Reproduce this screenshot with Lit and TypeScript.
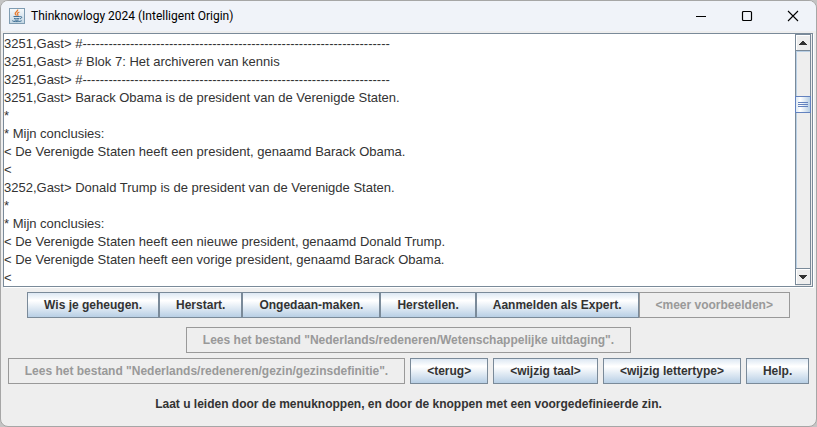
import { LitElement, html, css, svg } from "lit";
import { customElement, property } from "lit/decorators.js";

const RULE = "#" + "-".repeat(71);

const CONSOLE_TEXT = [
  "3251,Gast> " + RULE,
  "3251,Gast> # Blok 7: Het archiveren van kennis",
  "3251,Gast> " + RULE,
  "3251,Gast> Barack Obama is de president van de Verenigde Staten.",
  "*",
  "* Mijn conclusies:",
  "< De Verenigde Staten heeft een president, genaamd Barack Obama.",
  "<",
  "3252,Gast> Donald Trump is de president van de Verenigde Staten.",
  "*",
  "* Mijn conclusies:",
  "< De Verenigde Staten heeft een nieuwe president, genaamd Donald Trump.",
  "< De Verenigde Staten heeft een vorige president, genaamd Barack Obama.",
  "<",
].join("\n");

interface Action {
  label: string;
  disabled?: boolean;
}

const MENU: Action[] = [
  { label: "Wis je geheugen." },
  { label: "Herstart." },
  { label: "Ongedaan-maken." },
  { label: "Herstellen." },
  { label: "Aanmelden als Expert." },
  { label: "<meer voorbeelden>", disabled: true },
];

const CHALLENGE: Action[] = [
  { label: 'Lees het bestand "Nederlands/redeneren/Wetenschappelijke uitdaging".', disabled: true },
];

const NAVIGATION: Action[] = [
  { label: 'Lees het bestand "Nederlands/redeneren/gezin/gezinsdefinitie".', disabled: true },
  { label: "<terug>" },
  { label: "<wijzig taal>" },
  { label: "<wijzig lettertype>" },
  { label: "Help." },
];

@customElement("title-bar")
export class TitleBar extends LitElement {
  @property() heading = "";

  static styles = css`
    :host {
      display: flex;
      align-items: center;
      height: 30px;
      padding-left: 8px;
      background: #f0f3f9;
      color: #000;
      font: 12px/16px Roboto, "Open Sans", sans-serif;
    }
    .logo {
      width: 16px;
      height: 16px;
      margin-right: 6px;
    }
    .heading {
      flex: 1;
      margin: 0;
      font: inherit;
      white-space: nowrap;
    }
    .control {
      display: grid;
      place-items: center;
      width: 46px;
      height: 30px;
      padding: 0;
      border: 0;
      background: none;
      color: inherit;
    }
    .control:hover {
      background: #dfe3ea;
    }
  `;

  private control(label: string, glyph: unknown) {
    return html`<button class="control" aria-label=${label}>
      <svg width="12" height="12" viewBox="0 0 12 12" fill="none" stroke="currentColor">${glyph}</svg>
    </button>`;
  }

  render() {
    return html`
      <svg class="logo" viewBox="0 0 16 16" aria-hidden="true">
        <defs>
          <linearGradient id="tile" x1="0" y1="0" x2="0" y2="1">
            <stop offset="0" stop-color="#f7fafc" />
            <stop offset="1" stop-color="#c3d6e4" />
          </linearGradient>
        </defs>
        <rect x="0.5" y="0.5" width="15" height="15" fill="url(#tile)" stroke="#7f9cb2" />
        <path d="M8.6 1.5c.9 1.7-3 2.7-2.4 4.3.2.6 1 1.2 1.2 1.8M10.4 4c-1.6.7-2.6 1.3-1.7 2.3.4.5.3 1-.2 1.4" fill="none" stroke="#e8792b" stroke-width="1.3" />
        <path d="M4.500 8.500h6.300M5 10.300c1.400.5 4 .5 5.400 0M5.600 12c1.200.4 3 .4 4.200 0M11.200 8.600c2-.5 2.200 1.500-.2 2.200M3.500 12.500c-1.200 1.200 7.500 1.600 9.200.2" fill="none" stroke="#3f6f94" />
      </svg>
      <h1 class="heading">${this.heading}</h1>
      ${this.control("Minimaliseren", svg`<path d="M1 6.500h10" />`)}
      ${this.control("Maximaliseren", svg`<rect x="1.5" y="1.5" width="9" height="9" rx="1" stroke-width="1.2" />`)}
      ${this.control("Sluiten", svg`<path d="M1 1l10 10M11 1L1 11" stroke-width="1.1" />`)}
    `;
  }
}

@customElement("metal-scrollbar")
export class MetalScrollbar extends LitElement {
  static styles = css`
    :host {
      display: flex;
      flex-direction: column;
      box-sizing: border-box;
      width: 16px;
      border: 1px solid #7a8a99;
      background: #eee;
    }
    .arrow {
      display: grid;
      place-items: center;
      height: 15px;
      padding: 0;
      border: 0;
      background: #eee;
      box-shadow: inset 1px 1px #fff;
    }
    .track {
      flex: 1;
      display: grid;
      grid-template-rows: 46fr 17px 157fr;
      border: solid #7a8a99;
      border-width: 1px 0;
      box-shadow: inset 1px 1px #b8cfe5;
    }
    .thumb {
      grid-row: 2;
      display: grid;
      place-items: center;
      margin: 0 -1px;
      box-sizing: border-box;
      border: 1px solid #6382bf;
      background: linear-gradient(90deg, #dce8f3, #fff 30%, #b8cfe5);
    }
  `;

  render() {
    return html`
      <button class="arrow" aria-label="Omhoog">
        <svg width="8" height="4" viewBox="0 0 8 4" fill="#333"><path d="M3 0h2v1h1v1h1v1h1v1H0V3h1V2h1V1h1z" /></svg>
      </button>
      <div class="track">
        <div class="thumb">
          <svg width="10" height="6" viewBox="0 0 10 6" stroke="#6382bf"><path d="M0 .5h10M0 2.5h10M0 4.5h10" /></svg>
        </div>
      </div>
      <button class="arrow" aria-label="Omlaag">
        <svg width="8" height="4" viewBox="0 0 8 4" fill="#333"><path d="M0 0h8v1H7v1H6v1H5v1H3V3H2V2H1V1H0z" /></svg>
      </button>
    `;
  }
}

@customElement("app-root")
export class AppRoot extends LitElement {
  static styles = css`
    :host {
      display: block;
      background: #c4c4c4;
    }
    .window {
      box-sizing: border-box;
      min-height: 100vh;
      display: flex;
      flex-direction: column;
      overflow: hidden;
      border: 1px solid #a6a6a6;
      border-radius: 8px;
      background: #eee;
      color: #333;
      font: bold 12px/16px "Liberation Sans", Arial, sans-serif;
    }
    .pane {
      display: flex;
      margin: 2px 3px 0 2px;
      border: 1px solid #7a8a99;
      box-shadow: 1px 1px #fff;
    }
    .console {
      flex: 1;
      box-sizing: border-box;
      min-width: 0;
      height: 252px;
      margin: 0;
      padding: 1px 0 0;
      border: 0;
      outline: 0;
      resize: none;
      overflow: hidden;
      background: #fff;
      color: #333;
      font: 13px/18px "Liberation Sans", Arial, sans-serif;
    }
    .scroll {
      margin: 0 1px 1px 0;
    }
    .row {
      display: flex;
      justify-content: center;
    }
    .menu {
      margin-top: 5px;
    }
    .challenge {
      margin-top: 9px;
    }
    .navigation {
      gap: 5px;
      margin-top: 5px;
    }
    .action {
      box-sizing: border-box;
      height: 26px;
      padding: 0 16px;
      border: 1px solid #7a8a99;
      background: linear-gradient(#dde8f3, #fff 30%, #fff 32%, #b8cfe5);
      color: #333;
      font: inherit;
      white-space: nowrap;
    }
    .action:disabled {
      border-color: #999;
      background: #eee;
      color: #999;
    }
    .hint {
      margin: 12px 0;
      text-align: center;
    }
  `;

  private actions(items: Action[]) {
    return items.map(
      (item) => html`<button class="action" ?disabled=${item.disabled}>${item.label}</button>`
    );
  }

  render() {
    return html`
      <main class="window">
        <title-bar heading="Thinknowlogy 2024 (Intelligent Origin)"></title-bar>
        <div class="pane">
          <textarea class="console" aria-label="Console" readonly spellcheck="false" .value=${CONSOLE_TEXT}></textarea>
          <metal-scrollbar class="scroll"></metal-scrollbar>
        </div>
        <div class="row menu">${this.actions(MENU)}</div>
        <div class="row challenge">${this.actions(CHALLENGE)}</div>
        <div class="row navigation">${this.actions(NAVIGATION)}</div>
        <p class="hint">Laat u leiden door de menuknoppen, en door de knoppen met een voorgedefinieerde zin.</p>
      </main>
    `;
  }
}
